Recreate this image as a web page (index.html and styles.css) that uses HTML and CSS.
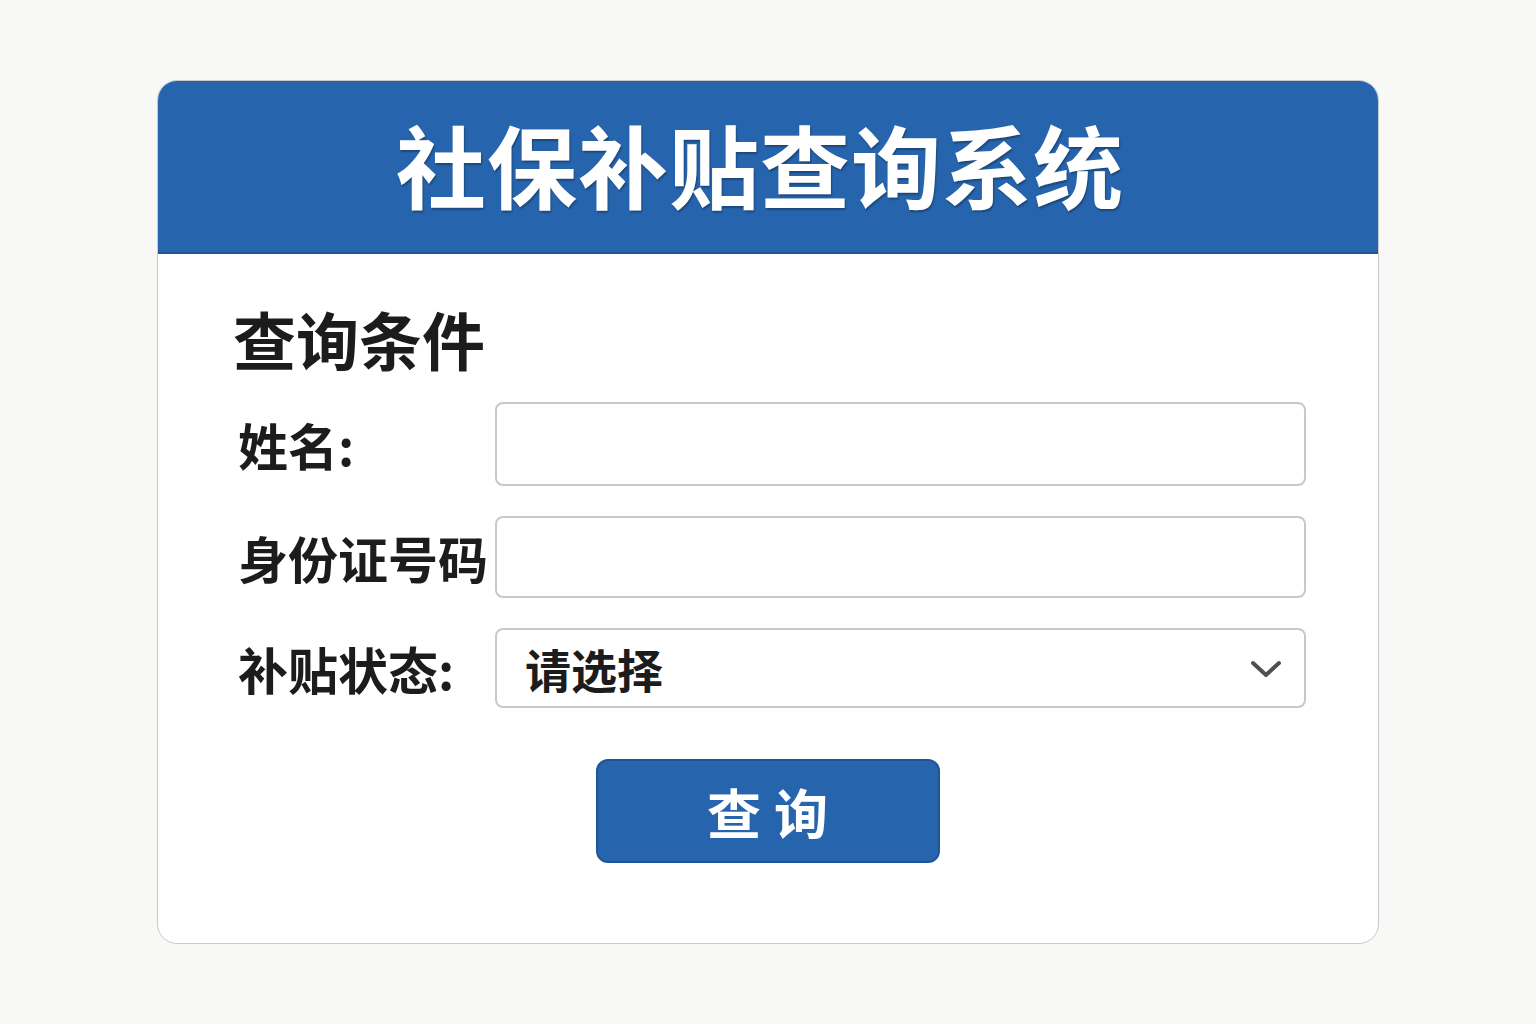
FILE: index.html
```html
<!DOCTYPE html>
<html lang="zh-CN">
<head>
    <meta charset="UTF-8">
    <meta name="viewport" content="width=device-width, initial-scale=1.0">
    <title>社保补贴查询系统</title>
    <link rel="stylesheet" href="styles.css">
</head>
<body>
    <div class="card">
        <div class="card-header">
            <h1>社保补贴查询系统</h1>
        </div>
        <div class="card-body">
            <h2>查询条件</h2>
            <form class="query-form" onsubmit="return false;">
                <label for="nameInput">姓名:</label>
                <input type="text" id="nameInput" class="field field-name">

                <label for="idInput">身份证号码</label>
                <input type="text" id="idInput" class="field">

                <label for="statusSelect">补贴状态:</label>
                <div class="select-wrap">
                    <select id="statusSelect" class="field">
                        <option value="">请选择</option>
                        <option value="1">已发放</option>
                        <option value="2">未发放</option>
                        <option value="3">审核中</option>
                    </select>
                    <svg class="chevron" width="32" height="20" viewBox="0 0 32 20">
                        <path d="M3 3 L16 15 L29 3" fill="none" stroke="#505050" stroke-width="4" stroke-linecap="round" stroke-linejoin="round"/>
                    </svg>
                </div>

                <div class="actions">
                    <button type="submit">查询</button>
                </div>
            </form>
        </div>
    </div>
</body>
</html>
```

FILE: styles.css
```css
body {
    margin: 0;
    background: #f8f8f6;
    font-family: "Noto Sans CJK SC", "Noto Sans", sans-serif;
    color: #1c1c1c;
}
.card {
    width: 1222px;
    box-sizing: border-box;
    margin: 80px auto 0;
    background: #fff;
    border: 1px solid #c9c9c9;
    border-radius: 20px;
    overflow: hidden;
}
.card-header {
    height: 173px;
    box-sizing: border-box;
    padding-bottom: 8px;
    background: #2665ae;
    border-bottom: 2px solid #1f5597;
    display: flex;
    align-items: center;
    justify-content: center;
}
.card-header h1 {
    margin: 0 16px 0 0;
    color: #fff;
    font-size: 90px;
    font-weight: 700;
    line-height: 1;
    letter-spacing: 1px;
    text-shadow: 1px 2px 2px rgba(0, 0, 0, 0.3);
}
.card-body {
    padding: 48px 72px 80px 75px;
}
.card-body h2 {
    margin: 0 0 28px;
    font-size: 63px;
    font-weight: 700;
    line-height: 72px;
}
.query-form {
    display: grid;
    grid-template-columns: 262px 1fr;
    row-gap: 30px;
    align-items: center;
}
.query-form label {
    font-size: 50px;
    font-weight: 600;
    line-height: 1;
    white-space: nowrap;
    padding-left: 5px;
}
.field {
    width: 100%;
    height: 82px;
    box-sizing: border-box;
    border: 2px solid #c8c8c8;
    border-radius: 8px;
    background: #fff;
    font-family: inherit;
    font-size: 46px;
    color: #1c1c1c;
    padding: 0 28px;
    outline: none;
}
.field-name {
    height: 84px;
}
.select-wrap {
    position: relative;
}
.select-wrap select {
    appearance: none;
    -webkit-appearance: none;
    height: 80px;
    font-weight: 600;
}
.chevron {
    position: absolute;
    right: 24px;
    top: 32px;
    pointer-events: none;
}
.actions {
    grid-column: 1 / -1;
    display: flex;
    justify-content: center;
    margin-top: 21px;
    padding-right: 4px;
}
.actions button {
    width: 344px;
    height: 104px;
    background: #2665ae;
    border: 2px solid #1f5597;
    border-radius: 12px;
    color: #fff;
    font-family: inherit;
    font-size: 54px;
    font-weight: 700;
    letter-spacing: 13px;
    text-indent: 13px;
    cursor: pointer;
}
```
